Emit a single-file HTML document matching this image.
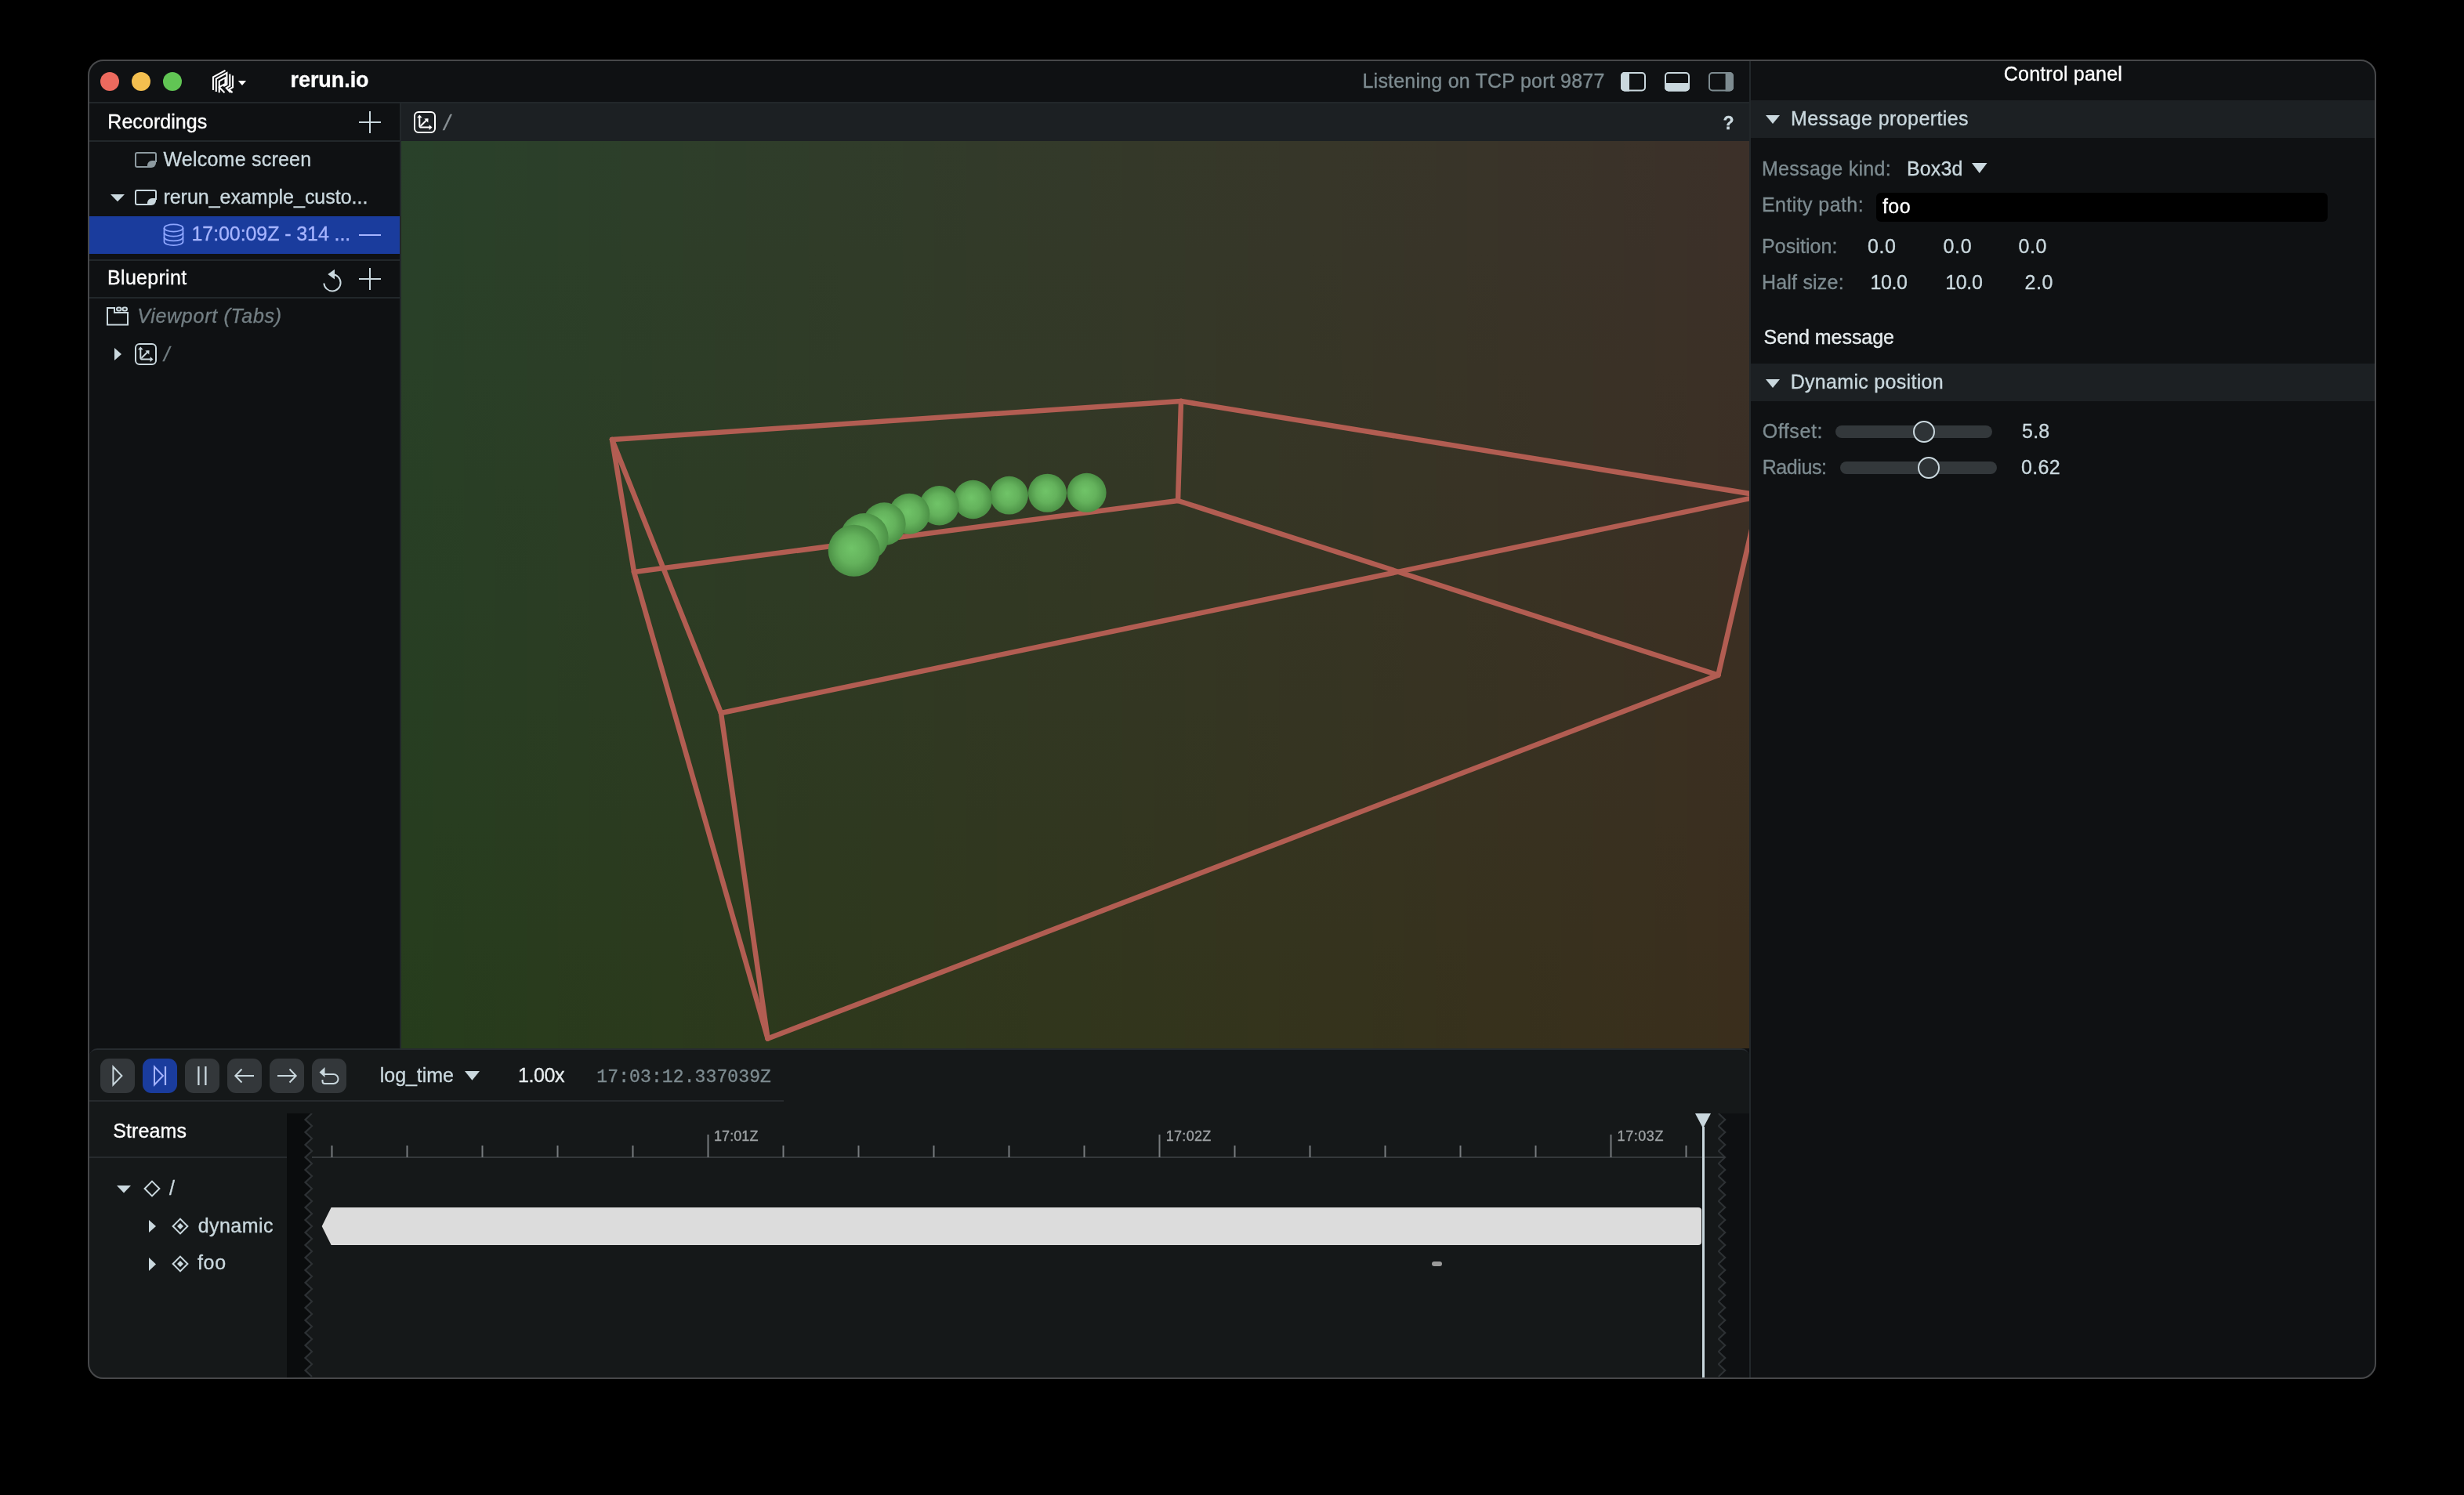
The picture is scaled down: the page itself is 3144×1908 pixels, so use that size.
<!DOCTYPE html>
<html><head><meta charset="utf-8"><style>
.t{}
html,body{margin:0;padding:0;background:#000;width:3144px;height:1908px;overflow:hidden;position:relative;font-family:"Liberation Sans",sans-serif;}
</style></head><body>
<div style="position:absolute;left:112px;top:76px;width:2920px;height:1684px;background:#0f1113;"></div>
<div style="position:absolute;left:114px;top:130px;width:2118px;height:2px;background:#22272a;"></div>
<div style="position:absolute;left:114px;top:179px;width:396px;height:2px;background:#22272a;"></div>
<div style="position:absolute;left:114px;top:331px;width:396px;height:2px;background:#22272a;"></div>
<div style="position:absolute;left:114px;top:379px;width:396px;height:2px;background:#22272a;"></div>
<div style="position:absolute;left:510px;top:132px;width:2px;height:1206px;background:#22272a;"></div>
<div style="position:absolute;left:512px;top:132px;width:1720px;height:48px;background:#1c2023;"></div>
<div style="position:absolute;left:512px;top:180px;width:1720px;height:1158px;overflow:hidden"><div style="position:absolute;left:0.00px;top:0;width:40.60px;height:1158px;background:linear-gradient(to bottom,#29412a,#294029,#294027,#283f25,#283e24,#273e22,#273d20,#273d1e,#263c1c)"></div><div style="position:absolute;left:40.00px;top:0;width:40.60px;height:1158px;background:linear-gradient(to bottom,#2a402a,#294028,#293f27,#293f25,#283e24,#283d22,#283d20,#273c1e,#273c1c)"></div><div style="position:absolute;left:80.00px;top:0;width:40.60px;height:1158px;background:linear-gradient(to bottom,#2a402a,#2a4028,#2a3f27,#293e25,#293e24,#293d22,#283d20,#283c1e,#273b1c)"></div><div style="position:absolute;left:120.00px;top:0;width:40.60px;height:1158px;background:linear-gradient(to bottom,#2b402a,#2b3f28,#2a3f27,#2a3e25,#293d24,#293d22,#293c20,#283c1e,#283b1c)"></div><div style="position:absolute;left:160.00px;top:0;width:40.60px;height:1158px;background:linear-gradient(to bottom,#2b3f2a,#2b3f28,#2b3e27,#2a3e25,#2a3d24,#2a3d22,#293c20,#293b1e,#293b1c)"></div><div style="position:absolute;left:200.00px;top:0;width:40.60px;height:1158px;background:linear-gradient(to bottom,#2c3f2a,#2c3f28,#2b3e27,#2b3d25,#2b3d24,#2a3c22,#2a3c20,#2a3b1e,#293a1c)"></div><div style="position:absolute;left:240.00px;top:0;width:40.60px;height:1158px;background:linear-gradient(to bottom,#2c3f2a,#2c3e28,#2c3e27,#2b3d25,#2b3c24,#2b3c22,#2a3b20,#2a3b1e,#2a3a1c)"></div><div style="position:absolute;left:280.00px;top:0;width:40.60px;height:1158px;background:linear-gradient(to bottom,#2d3e2a,#2d3e28,#2c3d27,#2c3d25,#2c3c24,#2b3c22,#2b3b20,#2b3a1e,#2a3a1c)"></div><div style="position:absolute;left:320.00px;top:0;width:40.60px;height:1158px;background:linear-gradient(to bottom,#2d3e2a,#2d3e28,#2d3d27,#2c3c25,#2c3c24,#2c3b22,#2b3b20,#2b3a1e,#2b3a1c)"></div><div style="position:absolute;left:360.00px;top:0;width:40.60px;height:1158px;background:linear-gradient(to bottom,#2e3e2a,#2e3d28,#2d3d27,#2d3c25,#2d3c24,#2c3b22,#2c3a20,#2c3a1e,#2b391c)"></div><div style="position:absolute;left:400.00px;top:0;width:40.60px;height:1158px;background:linear-gradient(to bottom,#2e3d2a,#2e3d28,#2e3c27,#2d3c25,#2d3b24,#2d3b22,#2c3a20,#2c3a1e,#2c391c)"></div><div style="position:absolute;left:440.00px;top:0;width:40.60px;height:1158px;background:linear-gradient(to bottom,#2f3d2a,#2f3c28,#2e3c27,#2e3b25,#2e3b24,#2d3a22,#2d3a20,#2d391e,#2c391c)"></div><div style="position:absolute;left:480.00px;top:0;width:40.60px;height:1158px;background:linear-gradient(to bottom,#2f3d2a,#2f3c28,#2f3c27,#2e3b25,#2e3b24,#2e3a22,#2d3920,#2d391e,#2d381c)"></div><div style="position:absolute;left:520.00px;top:0;width:40.60px;height:1158px;background:linear-gradient(to bottom,#303c2a,#303c28,#2f3b27,#2f3b25,#2f3a24,#2e3a22,#2e3920,#2e391e,#2d381c)"></div><div style="position:absolute;left:560.00px;top:0;width:40.60px;height:1158px;background:linear-gradient(to bottom,#303c2a,#303b28,#303b27,#2f3a25,#2f3a23,#2f3922,#2e3920,#2e381e,#2e381c)"></div><div style="position:absolute;left:600.00px;top:0;width:40.60px;height:1158px;background:linear-gradient(to bottom,#313c2a,#303b28,#303b27,#303a25,#303923,#2f3922,#2f3820,#2f381e,#2e371c)"></div><div style="position:absolute;left:640.00px;top:0;width:40.60px;height:1158px;background:linear-gradient(to bottom,#313b2a,#313b28,#313a27,#303a25,#303923,#303922,#2f3820,#2f381e,#2f371c)"></div><div style="position:absolute;left:680.00px;top:0;width:40.60px;height:1158px;background:linear-gradient(to bottom,#323b2a,#313a28,#313a27,#313925,#303923,#303822,#303820,#30371e,#2f371c)"></div><div style="position:absolute;left:720.00px;top:0;width:40.60px;height:1158px;background:linear-gradient(to bottom,#323a2a,#323a28,#323927,#313925,#313823,#313822,#303720,#30371e,#30361c)"></div><div style="position:absolute;left:760.00px;top:0;width:40.60px;height:1158px;background:linear-gradient(to bottom,#333a2a,#323a28,#323927,#323925,#313823,#313822,#313720,#31371e,#30361c)"></div><div style="position:absolute;left:800.00px;top:0;width:40.60px;height:1158px;background:linear-gradient(to bottom,#333a2a,#333928,#323927,#323825,#323823,#323722,#313720,#31361e,#31361c)"></div><div style="position:absolute;left:840.00px;top:0;width:40.60px;height:1158px;background:linear-gradient(to bottom,#33392a,#333928,#333827,#333825,#323723,#323722,#323620,#31361e,#31361c)"></div><div style="position:absolute;left:880.00px;top:0;width:40.60px;height:1158px;background:linear-gradient(to bottom,#343929,#343828,#333827,#333725,#333723,#323722,#323620,#32361e,#32351c)"></div><div style="position:absolute;left:920.00px;top:0;width:40.60px;height:1158px;background:linear-gradient(to bottom,#343829,#343828,#343827,#333725,#333723,#333622,#333620,#32351e,#32351c)"></div><div style="position:absolute;left:960.00px;top:0;width:40.60px;height:1158px;background:linear-gradient(to bottom,#353829,#343828,#343727,#343725,#343623,#333622,#333520,#33351e,#32351c)"></div><div style="position:absolute;left:1000.00px;top:0;width:40.60px;height:1158px;background:linear-gradient(to bottom,#353829,#353728,#353727,#343625,#343623,#343622,#333520,#33351e,#33341c)"></div><div style="position:absolute;left:1040.00px;top:0;width:40.60px;height:1158px;background:linear-gradient(to bottom,#363729,#353728,#353626,#353625,#343623,#343522,#343520,#34341e,#33341c)"></div><div style="position:absolute;left:1080.00px;top:0;width:40.60px;height:1158px;background:linear-gradient(to bottom,#363729,#363628,#353626,#353625,#353523,#353522,#343420,#34341e,#34341c)"></div><div style="position:absolute;left:1120.00px;top:0;width:40.60px;height:1158px;background:linear-gradient(to bottom,#363629,#363628,#363626,#363525,#353523,#353422,#353420,#34341e,#34331c)"></div><div style="position:absolute;left:1160.00px;top:0;width:40.60px;height:1158px;background:linear-gradient(to bottom,#373629,#373628,#363526,#363525,#363423,#353422,#353420,#35331e,#35331c)"></div><div style="position:absolute;left:1200.00px;top:0;width:40.60px;height:1158px;background:linear-gradient(to bottom,#373629,#373528,#373526,#363425,#363423,#363422,#363320,#35331e,#35331c)"></div><div style="position:absolute;left:1240.00px;top:0;width:40.60px;height:1158px;background:linear-gradient(to bottom,#383529,#373528,#373426,#373425,#373423,#363322,#363320,#36331e,#35321c)"></div><div style="position:absolute;left:1280.00px;top:0;width:40.60px;height:1158px;background:linear-gradient(to bottom,#383529,#383428,#373426,#373425,#373323,#373322,#363320,#36321e,#36321c)"></div><div style="position:absolute;left:1320.00px;top:0;width:40.60px;height:1158px;background:linear-gradient(to bottom,#383429,#383428,#383426,#383325,#373323,#373322,#373220,#37321e,#36311c)"></div><div style="position:absolute;left:1360.00px;top:0;width:40.60px;height:1158px;background:linear-gradient(to bottom,#393429,#393428,#383326,#383325,#383323,#373222,#373220,#37311e,#37311c)"></div><div style="position:absolute;left:1400.00px;top:0;width:40.60px;height:1158px;background:linear-gradient(to bottom,#393329,#393328,#393326,#383225,#383223,#383222,#383120,#37311e,#37311c)"></div><div style="position:absolute;left:1440.00px;top:0;width:40.60px;height:1158px;background:linear-gradient(to bottom,#3a3329,#393328,#393226,#393225,#393223,#383122,#383120,#38311e,#37301c)"></div><div style="position:absolute;left:1480.00px;top:0;width:40.60px;height:1158px;background:linear-gradient(to bottom,#3a3329,#3a3228,#393226,#393225,#393123,#393122,#383120,#38301e,#38301c)"></div><div style="position:absolute;left:1520.00px;top:0;width:40.60px;height:1158px;background:linear-gradient(to bottom,#3a3229,#3a3228,#3a3126,#3a3125,#393123,#393122,#393020,#39301e,#38301c)"></div><div style="position:absolute;left:1560.00px;top:0;width:40.60px;height:1158px;background:linear-gradient(to bottom,#3b3229,#3a3128,#3a3126,#3a3125,#3a3023,#393022,#393020,#39301e,#392f1c)"></div><div style="position:absolute;left:1600.00px;top:0;width:40.60px;height:1158px;background:linear-gradient(to bottom,#3b3129,#3b3128,#3b3126,#3a3025,#3a3023,#3a3021,#3a3020,#392f1e,#392f1c)"></div><div style="position:absolute;left:1640.00px;top:0;width:40.60px;height:1158px;background:linear-gradient(to bottom,#3b3129,#3b3028,#3b3026,#3b3025,#3a3023,#3a2f21,#3a2f20,#3a2f1e,#392f1c)"></div><div style="position:absolute;left:1680.00px;top:0;width:40.60px;height:1158px;background:linear-gradient(to bottom,#3c3029,#3c3028,#3b3026,#3b2f25,#3b2f23,#3b2f21,#3a2f20,#3a2e1e,#3a2e1c)"></div></div>
<div style="position:absolute;left:2222px;top:1338px;width:10px;height:10px;background:#0e1012;"></div>
<div style="position:absolute;left:114px;top:1338px;width:2118px;height:1420px;box-sizing:border-box;border-top:2px solid #262b2f;border-radius:10px 10px 0 0;background:#151819"></div>
<div style="position:absolute;left:2232px;top:78px;width:2px;height:1680px;background:#22272a;"></div>
<div style="position:absolute;left:2234px;top:78px;width:796px;height:1680px;background:#0f1113;"></div>
<div style="position:absolute;left:2234px;top:128px;width:796px;height:48px;background:#1c2023;"></div>
<div style="position:absolute;left:2234px;top:464px;width:796px;height:48px;background:#1c2023;"></div>
<div style="position:absolute;left:127.8px;top:91.8px;width:24px;height:24px;border-radius:50%;background:#ec6a5e"></div>
<div style="position:absolute;left:168px;top:91.8px;width:24px;height:24px;border-radius:50%;background:#f4bf4f"></div>
<div style="position:absolute;left:208px;top:91.8px;width:24px;height:24px;border-radius:50%;background:#61c554"></div>
<svg style="position:absolute;left:269px;top:87px;" width="32" height="34" viewBox="0 0 32 34"><g fill="none" stroke="#fff" stroke-width="2.1" stroke-linejoin="miter"><path d="M3,28 V11.4 L18.5,2.8"/><path d="M6.8,30 V13.5 L20.4,6 V20.9 L16.2,23.2"/><path d="M10.7,31.3 V16.5 L18.5,12.2 V19.8 L10.7,24.2 L17.5,31.3"/><path d="M24.3,7.5 V22.7 L19.8,25.2 L25.2,31.1"/><path d="M28,9.5 V24.5 L23.2,27.2 L27.6,31.1"/></g></svg>
<svg style="position:absolute;left:303px;top:102px;" width="12" height="8" viewBox="0 0 12 8"><path d="M0.8,0.9 H11.1 L6,6.9 Z" fill="#fff"/></svg>
<svg style="position:absolute;left:2068px;top:92px;" width="32" height="25" viewBox="0 0 32 25"><rect x="1" y="1" width="30" height="22.4" rx="4" fill="none" stroke="#cad8de" stroke-width="2"/><path d="M5,0 H11 V24.4 H5 A5,5 0 0 1 0,19.4 V5 A5,5 0 0 1 5,0 Z" fill="#cad8de"/></svg>
<svg style="position:absolute;left:2124px;top:92px;" width="32" height="25" viewBox="0 0 32 25"><rect x="1" y="1" width="30" height="22.4" rx="4" fill="none" stroke="#cad8de" stroke-width="2"/><path d="M0,14 H32 V19.4 A5,5 0 0 1 27,24.4 H5 A5,5 0 0 1 0,19.4 Z" fill="#cad8de"/></svg>
<svg style="position:absolute;left:2180px;top:92px;" width="32" height="25" viewBox="0 0 32 25"><rect x="1" y="1" width="30" height="22.4" rx="4" fill="none" stroke="#7d8b90" stroke-width="2"/><path d="M21.6,0 H27 A5,5 0 0 1 32,5 V19.4 A5,5 0 0 1 27,24.4 H21.6 Z" fill="#7d8b90"/></svg>
<svg style="position:absolute;left:457px;top:141px;" width="30" height="30" viewBox="0 0 30 30"><path d="M15,1 V29 M1,15 H29" stroke="#cad8de" stroke-width="2"/></svg>
<svg style="position:absolute;left:172px;top:194px;" width="28" height="20" viewBox="0 0 28 20"><path d="M3,1 H25 A2,2 0 0 1 27,3 V12 H22 A5,5 0 0 0 17,17 V19 H3 A2,2 0 0 1 1,17 V3 A2,2 0 0 1 3,1 Z" fill="none" stroke="#8d9aa0" stroke-width="2"/><path d="M17,18.5 V17 A4.5,4.5 0 0 1 21.5,12.5 H27 V14 A6,6 0 0 1 21,20 H17 Z" fill="#8d9aa0"/></svg>
<svg style="position:absolute;left:140px;top:247px;" width="20" height="11" viewBox="0 0 20 11"><path d="M1,1 H19 L10,10.2 Z" fill="#cad8de"/></svg>
<svg style="position:absolute;left:172px;top:242px;" width="28" height="20" viewBox="0 0 28 20"><path d="M3,1 H25 A2,2 0 0 1 27,3 V12 H22 A5,5 0 0 0 17,17 V19 H3 A2,2 0 0 1 1,17 V3 A2,2 0 0 1 3,1 Z" fill="none" stroke="#cad8de" stroke-width="2"/><path d="M17,18.5 V17 A4.5,4.5 0 0 1 21.5,12.5 H27 V14 A6,6 0 0 1 21,20 H17 Z" fill="#cad8de"/></svg>
<div style="position:absolute;left:114px;top:276px;width:396px;height:47.6px;background:#1a3c9d;"></div>
<svg style="position:absolute;left:208px;top:285px;" width="27" height="30" viewBox="0 0 27 30"><g fill="none" stroke="#8ea6ff" stroke-width="1.8"><ellipse cx="13.5" cy="6" rx="12" ry="4.6"/><path d="M1.5,6 V23.5 A12,4.6 0 0 0 25.5,23.5 V6"/><path d="M1.5,12 A12,4.6 0 0 0 25.5,12"/><path d="M1.5,17.8 A12,4.6 0 0 0 25.5,17.8"/></g></svg>
<div style="position:absolute;left:458px;top:299px;width:28px;height:2px;background:#a6b4ff;"></div>
<svg style="position:absolute;left:411px;top:340px;" width="32" height="34" viewBox="0 0 32 34"><path d="M13.6,10.2 A10.6,10.6 0 1 1 2.4,21.5" fill="none" stroke="#cad8de" stroke-width="2"/><path d="M7.3,10.1 L16,3.8 V16.6 Z" fill="#cad8de"/></svg>
<svg style="position:absolute;left:457px;top:341px;" width="30" height="30" viewBox="0 0 30 30"><path d="M15,1 V29 M1,15 H29" stroke="#cad8de" stroke-width="2"/></svg>
<svg style="position:absolute;left:135px;top:390px;" width="30" height="27" viewBox="0 0 30 27"><g fill="none" stroke="#cad8de" stroke-width="2"><path d="M2,3 H11 V9 H28 V24.5 H2 Z"/><rect x="14" y="2.5" width="5.5" height="4" rx="2"/><rect x="21.5" y="2.5" width="5.5" height="4" rx="2"/></g></svg>
<svg style="position:absolute;left:145px;top:443px;" width="12" height="18" viewBox="0 0 12 18"><path d="M1,1 V17 L10,9 Z" fill="#cad8de"/></svg>
<svg style="position:absolute;left:172px;top:438px;" width="28" height="28" viewBox="0 0 28 28"><g fill="none" stroke="#cad8de" stroke-width="2"><rect x="1" y="1" width="26" height="26" rx="5"/><path d="M7.3,6.5 V18.5 Q7.3,20.6 9.4,20.6 H21"/><path d="M8.5,19 L17.5,10"/></g><g fill="#cad8de"><path d="M4,8.2 L7.3,4.5 L10.7,8.2 Z"/><path d="M19.6,17.2 L23.5,20.6 L19.6,24 Z"/><path d="M13.3,9.4 L18.5,9.3 L18.3,14.6 Z"/></g></svg>
<svg style="position:absolute;left:528px;top:142px;" width="28" height="28" viewBox="0 0 28 28"><g fill="none" stroke="#ffffff" stroke-width="2"><rect x="1" y="1" width="26" height="26" rx="5"/><path d="M7.3,6.5 V18.5 Q7.3,20.6 9.4,20.6 H21"/><path d="M8.5,19 L17.5,10"/></g><g fill="#ffffff"><path d="M4,8.2 L7.3,4.5 L10.7,8.2 Z"/><path d="M19.6,17.2 L23.5,20.6 L19.6,24 Z"/><path d="M13.3,9.4 L18.5,9.3 L18.3,14.6 Z"/></g></svg>
<svg style="position:absolute;left:512px;top:180px;overflow:hidden" width="1720" height="1158" viewBox="0 0 1720 1158"><defs><radialGradient id="sg" cx="0.5" cy="0.5" r="0.5" fx="0.45" fy="0.45"><stop offset="0" stop-color="#70c468"/><stop offset="0.55" stop-color="#64b25c"/><stop offset="1" stop-color="#4c9146"/></radialGradient></defs><g stroke="#b25d52" stroke-width="6.5" stroke-linecap="round" stroke-linejoin="round" fill="none"><path d="M269.0,381.0 L995.0,332.0"/><path d="M269.0,381.0 L297.0,550.0"/><path d="M269.0,381.0 L408.0,730.0"/><path d="M297.0,550.0 L991.0,459.0"/><path d="M995.0,332.0 L991.0,459.0"/><path d="M991.0,459.0 L1680.4,681.6"/><path d="M297.0,550.0 L467.6,1145.5"/><path d="M408.0,730.0 L467.6,1145.5"/><path d="M467.6,1145.5 L1680.4,681.6"/><path d="M995.0,332.0 L1809.5,464.4"/><path d="M408.0,730.0 L1877.0,423.5"/><path d="M1680.4,681.6 L1759.6,336.8"/></g><circle cx="874.6" cy="448.8" r="25" fill="url(#sg)"/><circle cx="824.5" cy="449.3" r="24.55" fill="url(#sg)"/><circle cx="775.6" cy="452.2" r="24.35" fill="url(#sg)"/><circle cx="729.5" cy="457.5" r="24.7" fill="url(#sg)"/><circle cx="686.5" cy="465.3" r="25.2" fill="url(#sg)"/><circle cx="648.3" cy="475.7" r="26" fill="url(#sg)"/><circle cx="616.3" cy="488.7" r="27.4" fill="url(#sg)"/><circle cx="591.0" cy="505.7" r="30.6" fill="url(#sg)"/><circle cx="577.7" cy="522.8" r="33" fill="url(#sg)"/></svg>
<svg style="position:absolute;left:2252px;top:146px;" width="20" height="13" viewBox="0 0 20 13"><path d="M1,1 H19 L10.0,12 Z" fill="#cad8de"/></svg>
<svg style="position:absolute;left:2515px;top:207px;" width="21.5" height="15" viewBox="0 0 21.5 15"><path d="M1,1 H20.5 L10.75,14 Z" fill="#cad8de"/></svg>
<div style="position:absolute;left:2394px;top:246px;width:576px;height:37px;background:#000;border-radius:6px"></div>
<svg style="position:absolute;left:2252px;top:482.7px;" width="20" height="13" viewBox="0 0 20 13"><path d="M1,1 H19 L10.0,12 Z" fill="#cad8de"/></svg>
<div style="position:absolute;left:2342.4px;top:543px;width:199.5999999999999px;height:16px;border-radius:8px;background:#33383b"></div>
<div style="position:absolute;left:2441px;top:536.8px;width:24px;height:24px;border-radius:50%;background:#2e3336;border:2px solid #cad8de"></div>
<div style="position:absolute;left:2348.3px;top:589.4px;width:199.69999999999982px;height:16px;border-radius:8px;background:#33383b"></div>
<div style="position:absolute;left:2447.3px;top:583.2px;width:24px;height:24px;border-radius:50%;background:#2e3336;border:2px solid #cad8de"></div>
<div style="position:absolute;left:128px;top:1351px;width:44px;height:44px;border-radius:11px;background:#33373a"></div>
<div style="position:absolute;left:182px;top:1351px;width:44px;height:44px;border-radius:11px;background:#1a3c9d"></div>
<div style="position:absolute;left:236px;top:1351px;width:44px;height:44px;border-radius:11px;background:#33373a"></div>
<div style="position:absolute;left:290px;top:1351px;width:44px;height:44px;border-radius:11px;background:#33373a"></div>
<div style="position:absolute;left:344px;top:1351px;width:44px;height:44px;border-radius:11px;background:#33373a"></div>
<div style="position:absolute;left:398px;top:1351px;width:44px;height:44px;border-radius:11px;background:#33373a"></div>
<svg style="position:absolute;left:128px;top:1351px;" width="44" height="44" viewBox="0 0 44 44"><path d="M16.4,10.5 V33.5 L27.4,22 Z" fill="none" stroke="#cad8de" stroke-width="2" stroke-linejoin="miter"/></svg>
<svg style="position:absolute;left:182px;top:1351px;" width="44" height="44" viewBox="0 0 44 44"><path d="M15,10.5 V33.5 L26,22 Z" fill="none" stroke="#a6b4ff" stroke-width="2"/><path d="M29,10 V34" stroke="#a6b4ff" stroke-width="2.2"/></svg>
<svg style="position:absolute;left:236px;top:1351px;" width="44" height="44" viewBox="0 0 44 44"><path d="M17.4,10 V34 M26.4,10 V34" stroke="#cad8de" stroke-width="2.3"/></svg>
<svg style="position:absolute;left:290px;top:1351px;" width="44" height="44" viewBox="0 0 44 44"><path d="M10.5,22 H34 M18.5,13.5 L10.3,22 L18.5,30.5" fill="none" stroke="#cad8de" stroke-width="2"/></svg>
<svg style="position:absolute;left:344px;top:1351px;" width="44" height="44" viewBox="0 0 44 44"><path d="M10,22 H33.5 M25.5,13.5 L33.7,22 L25.5,30.5" fill="none" stroke="#cad8de" stroke-width="2"/></svg>
<svg style="position:absolute;left:398px;top:1351px;" width="44" height="44" viewBox="0 0 44 44"><path d="M14,20 H27.5 A6,6 0 0 1 27.5,32 H16.5 A3,3 0 0 1 13.5,29 V27" fill="none" stroke="#cad8de" stroke-width="2"/><path d="M9.5,17.5 L16.5,11 V24 Z" fill="#cad8de"/></svg>
<svg style="position:absolute;left:591.5px;top:1365.7px;" width="21" height="13.7" viewBox="0 0 21 13.7"><path d="M1,1 H20 L10.5,12.7 Z" fill="#cad8de"/></svg>
<div style="position:absolute;left:114px;top:1404px;width:886px;height:2px;background:#262a2d;"></div>
<div style="position:absolute;left:114px;top:1476px;width:252px;height:2px;background:#262a2d;"></div>
<svg style="position:absolute;left:366px;top:1421px;" width="34" height="337" viewBox="0 0 34 337"><path d="M0,0 L32,0 L23.5,8 L32,16 L23.5,24 L32,32 L23.5,40 L32,48 L23.5,56 L32,64 L23.5,72 L32,80 L23.5,88 L32,96 L23.5,104 L32,112 L23.5,120 L32,128 L23.5,136 L32,144 L23.5,152 L32,160 L23.5,168 L32,176 L23.5,184 L32,192 L23.5,200 L32,208 L23.5,216 L32,224 L23.5,232 L32,240 L23.5,248 L32,256 L23.5,264 L32,272 L23.5,280 L32,288 L23.5,296 L32,304 L23.5,312 L32,320 L23.5,328 L32,336 L0,337 Z" fill="#0a0c0d"/><path d="M32,0 L32,0 L23.5,8 L32,16 L23.5,24 L32,32 L23.5,40 L32,48 L23.5,56 L32,64 L23.5,72 L32,80 L23.5,88 L32,96 L23.5,104 L32,112 L23.5,120 L32,128 L23.5,136 L32,144 L23.5,152 L32,160 L23.5,168 L32,176 L23.5,184 L32,192 L23.5,200 L32,208 L23.5,216 L32,224 L23.5,232 L32,240 L23.5,248 L32,256 L23.5,264 L32,272 L23.5,280 L32,288 L23.5,296 L32,304 L23.5,312 L32,320 L23.5,328 L32,336" fill="none" stroke="#2d3134" stroke-width="2.2"/></svg>
<svg style="position:absolute;left:2192px;top:1421px;" width="40" height="337" viewBox="0 0 40 337"><path d="M40,0 L0.7,0 L0.7,0 L9.2,8 L0.7,16 L9.2,24 L0.7,32 L9.2,40 L0.7,48 L9.2,56 L0.7,64 L9.2,72 L0.7,80 L9.2,88 L0.7,96 L9.2,104 L0.7,112 L9.2,120 L0.7,128 L9.2,136 L0.7,144 L9.2,152 L0.7,160 L9.2,168 L0.7,176 L9.2,184 L0.7,192 L9.2,200 L0.7,208 L9.2,216 L0.7,224 L9.2,232 L0.7,240 L9.2,248 L0.7,256 L9.2,264 L0.7,272 L9.2,280 L0.7,288 L9.2,296 L0.7,304 L9.2,312 L0.7,320 L9.2,328 L0.7,336 L40,337 Z" fill="#0e1012"/><path d="M0.7,0 L0.7,0 L9.2,8 L0.7,16 L9.2,24 L0.7,32 L9.2,40 L0.7,48 L9.2,56 L0.7,64 L9.2,72 L0.7,80 L9.2,88 L0.7,96 L9.2,104 L0.7,112 L9.2,120 L0.7,128 L9.2,136 L0.7,144 L9.2,152 L0.7,160 L9.2,168 L0.7,176 L9.2,184 L0.7,192 L9.2,200 L0.7,208 L9.2,216 L0.7,224 L9.2,232 L0.7,240 L9.2,248 L0.7,256 L9.2,264 L0.7,272 L9.2,280 L0.7,288 L9.2,296 L0.7,304 L9.2,312 L0.7,320 L9.2,328 L0.7,336" fill="none" stroke="#2d3134" stroke-width="2.2"/></svg>
<div style="position:absolute;left:398px;top:1476px;width:1803px;height:2px;background:#34383b;"></div>
<svg style="position:absolute;left:366px;top:1421px;" width="1866" height="60" viewBox="0 0 1866 60"><g stroke="#777b7e" stroke-width="2"><path d="M57.5,41 V56"/><path d="M153.5,41 V56"/><path d="M249.5,41 V56"/><path d="M345.5,41 V56"/><path d="M441.5,41 V56"/><path d="M537.5,27 V56"/><path d="M633.5,41 V56"/><path d="M729.5,41 V56"/><path d="M825.5,41 V56"/><path d="M921.5,41 V56"/><path d="M1017.5,41 V56"/><path d="M1113.5,27 V56"/><path d="M1209.5,41 V56"/><path d="M1305.5,41 V56"/><path d="M1401.5,41 V56"/><path d="M1497.5,41 V56"/><path d="M1593.5,41 V56"/><path d="M1689.5,27 V56"/><path d="M1785.5,41 V56"/></g></svg>
<svg style="position:absolute;left:405px;top:1538px;" width="1772" height="54" viewBox="0 0 1772 54"><path d="M5.7,27 L17.6,3 H1762 A4,4 0 0 1 1766,7 V47 A4,4 0 0 1 1762,51 H17.6 Z" fill="#dcdcdc"/></svg>
<div style="position:absolute;left:1827px;top:1610px;width:13px;height:6px;border-radius:3px;background:#9a9a9a"></div>
<div style="position:absolute;left:2171.5px;top:1438px;width:3px;height:320px;background:#cad8de;"></div>
<svg style="position:absolute;left:2162px;top:1420px;" width="22" height="21" viewBox="0 0 22 21"><path d="M1,1 H21 L11,20 Z" fill="#cad8de"/></svg>
<svg style="position:absolute;left:148px;top:1512px;" width="20" height="12" viewBox="0 0 20 12"><path d="M1,1 H19 L10,10.4 Z" fill="#cad8de"/></svg>
<svg style="position:absolute;left:182.7px;top:1505.8px;" width="22" height="22" viewBox="0 0 22 22"><path d="M11,1.6 L20.4,11 L11,20.4 L1.6,11 Z" fill="none" stroke="#cad8de" stroke-width="2"/></svg>
<svg style="position:absolute;left:189px;top:1556px;" width="12" height="18" viewBox="0 0 12 18"><path d="M1,1 V17 L10,9 Z" fill="#cad8de"/></svg>
<svg style="position:absolute;left:218.8px;top:1553.9px;" width="22" height="22" viewBox="0 0 22 22"><path d="M11,1.6 L20.4,11 L11,20.4 L1.6,11 Z" fill="none" stroke="#cad8de" stroke-width="2"/><path d="M11,7 L15,11 L11,15 L7,11 Z" fill="#cad8de"/></svg>
<svg style="position:absolute;left:189px;top:1604px;" width="12" height="19" viewBox="0 0 12 19"><path d="M1,1 V18 L10,9.5 Z" fill="#cad8de"/></svg>
<svg style="position:absolute;left:219.1px;top:1602px;" width="22" height="22" viewBox="0 0 22 22"><path d="M11,1.6 L20.4,11 L11,20.4 L1.6,11 Z" fill="none" stroke="#cad8de" stroke-width="2"/><path d="M11,7 L15,11 L11,15 L7,11 Z" fill="#cad8de"/></svg>
<div style="position:absolute;left:112px;top:76px;width:2920px;height:1684px;box-sizing:border-box;border:2px solid #47484a;border-radius:20px;box-shadow:0 0 0 400px #000;pointer-events:none"></div>
<div style="position:absolute;left:0;top:0;width:3144px;height:1908px;will-change:transform">
<div style="position:absolute;left:370.5px;top:89.14px;font-family:'Liberation Sans',sans-serif;font-size:27px;line-height:27px;color:#ffffff;font-weight:700;font-style:normal;white-space:pre;-webkit-text-stroke:0.35px #ffffff;letter-spacing:-0.064px;">rerun.io</div>
<div style="position:absolute;left:1738.5px;top:90.83px;font-family:'Liberation Sans',sans-serif;font-size:25px;line-height:25px;color:#7d8b90;font-weight:400;font-style:normal;white-space:pre;-webkit-text-stroke:0.35px #7d8b90;letter-spacing:0.213px;">Listening on TCP port 9877</div>
<div style="position:absolute;left:2556.8px;top:81.83px;font-family:'Liberation Sans',sans-serif;font-size:25px;line-height:25px;color:#ffffff;font-weight:400;font-style:normal;white-space:pre;-webkit-text-stroke:0.35px #ffffff;letter-spacing:0.191px;">Control panel</div>
<div style="position:absolute;left:137.3px;top:142.93px;font-family:'Liberation Sans',sans-serif;font-size:25px;line-height:25px;color:#ffffff;font-weight:400;font-style:normal;white-space:pre;-webkit-text-stroke:0.35px #ffffff;letter-spacing:0.055px;">Recordings</div>
<div style="position:absolute;left:208.4px;top:190.83px;font-family:'Liberation Sans',sans-serif;font-size:25px;line-height:25px;color:#cad8de;font-weight:400;font-style:normal;white-space:pre;-webkit-text-stroke:0.35px #cad8de;letter-spacing:0.234px;">Welcome screen</div>
<div style="position:absolute;left:208.4px;top:238.83px;font-family:'Liberation Sans',sans-serif;font-size:25px;line-height:25px;color:#cad8de;font-weight:400;font-style:normal;white-space:pre;-webkit-text-stroke:0.35px #cad8de;letter-spacing:-0.012px;">rerun_example_custo...</div>
<div style="position:absolute;left:244.5px;top:286.33px;font-family:'Liberation Sans',sans-serif;font-size:25px;line-height:25px;color:#a6b4ff;font-weight:400;font-style:normal;white-space:pre;-webkit-text-stroke:0.35px #a6b4ff;letter-spacing:-0.084px;">17:00:09Z - 314 ...</div>
<div style="position:absolute;left:137.1px;top:342.43px;font-family:'Liberation Sans',sans-serif;font-size:25px;line-height:25px;color:#ffffff;font-weight:400;font-style:normal;white-space:pre;-webkit-text-stroke:0.35px #ffffff;letter-spacing:0.292px;">Blueprint</div>
<div style="position:absolute;left:175.2px;top:390.63px;font-family:'Liberation Sans',sans-serif;font-size:25px;line-height:25px;color:#737f84;font-weight:400;font-style:italic;white-space:pre;-webkit-text-stroke:0.35px #737f84;letter-spacing:0.733px;">Viewport (Tabs)</div>
<div style="position:absolute;left:209.0px;top:438.99px;font-family:'Liberation Sans',sans-serif;font-size:26px;line-height:26px;color:#737f84;font-weight:400;font-style:italic;white-space:pre;-webkit-text-stroke:0.35px #737f84;">/</div>
<div style="position:absolute;left:566.5px;top:142.79px;font-family:'Liberation Sans',sans-serif;font-size:28px;line-height:28px;color:#8a9296;font-weight:400;font-style:italic;white-space:pre;-webkit-text-stroke:0.35px #8a9296;">/</div>
<div style="position:absolute;left:2198.5px;top:145.53px;font-family:'Liberation Sans',sans-serif;font-size:23px;line-height:23px;color:#cad8de;font-weight:700;font-style:normal;white-space:pre;-webkit-text-stroke:0.35px #cad8de;">?</div>
<div style="position:absolute;left:2285.0px;top:139.33px;font-family:'Liberation Sans',sans-serif;font-size:25px;line-height:25px;color:#cad8de;font-weight:400;font-style:normal;white-space:pre;-webkit-text-stroke:0.35px #cad8de;letter-spacing:0.413px;">Message properties</div>
<div style="position:absolute;left:2248.0px;top:202.53px;font-family:'Liberation Sans',sans-serif;font-size:25px;line-height:25px;color:#7d8b90;font-weight:400;font-style:normal;white-space:pre;-webkit-text-stroke:0.35px #7d8b90;letter-spacing:0.292px;">Message kind:</div>
<div style="position:absolute;left:2433.0px;top:202.53px;font-family:'Liberation Sans',sans-serif;font-size:25px;line-height:25px;color:#cad8de;font-weight:400;font-style:normal;white-space:pre;-webkit-text-stroke:0.35px #cad8de;letter-spacing:0.122px;">Box3d</div>
<div style="position:absolute;left:2248.0px;top:248.53px;font-family:'Liberation Sans',sans-serif;font-size:25px;line-height:25px;color:#7d8b90;font-weight:400;font-style:normal;white-space:pre;-webkit-text-stroke:0.35px #7d8b90;letter-spacing:0.410px;">Entity path:</div>
<div style="position:absolute;left:2402.0px;top:251.13px;font-family:'Liberation Sans',sans-serif;font-size:25px;line-height:25px;color:#ffffff;font-weight:400;font-style:normal;white-space:pre;-webkit-text-stroke:0.35px #ffffff;letter-spacing:0.411px;">foo</div>
<div style="position:absolute;left:2248.0px;top:302.43px;font-family:'Liberation Sans',sans-serif;font-size:25px;line-height:25px;color:#7d8b90;font-weight:400;font-style:normal;white-space:pre;-webkit-text-stroke:0.35px #7d8b90;letter-spacing:0.068px;">Position:</div>
<div style="position:absolute;left:2383.0px;top:302.43px;font-family:'Liberation Sans',sans-serif;font-size:25px;line-height:25px;color:#cad8de;font-weight:400;font-style:normal;white-space:pre;-webkit-text-stroke:0.35px #cad8de;letter-spacing:0.611px;">0.0</div>
<div style="position:absolute;left:2479.6px;top:302.43px;font-family:'Liberation Sans',sans-serif;font-size:25px;line-height:25px;color:#cad8de;font-weight:400;font-style:normal;white-space:pre;-webkit-text-stroke:0.35px #cad8de;letter-spacing:0.611px;">0.0</div>
<div style="position:absolute;left:2575.4px;top:302.43px;font-family:'Liberation Sans',sans-serif;font-size:25px;line-height:25px;color:#cad8de;font-weight:400;font-style:normal;white-space:pre;-webkit-text-stroke:0.35px #cad8de;letter-spacing:0.611px;">0.0</div>
<div style="position:absolute;left:2248.0px;top:348.33px;font-family:'Liberation Sans',sans-serif;font-size:25px;line-height:25px;color:#7d8b90;font-weight:400;font-style:normal;white-space:pre;-webkit-text-stroke:0.35px #7d8b90;letter-spacing:0.199px;">Half size:</div>
<div style="position:absolute;left:2386.4px;top:348.33px;font-family:'Liberation Sans',sans-serif;font-size:25px;line-height:25px;color:#cad8de;font-weight:400;font-style:normal;white-space:pre;-webkit-text-stroke:0.35px #cad8de;letter-spacing:-0.343px;">10.0</div>
<div style="position:absolute;left:2482.2px;top:348.33px;font-family:'Liberation Sans',sans-serif;font-size:25px;line-height:25px;color:#cad8de;font-weight:400;font-style:normal;white-space:pre;-webkit-text-stroke:0.35px #cad8de;letter-spacing:-0.343px;">10.0</div>
<div style="position:absolute;left:2583.4px;top:348.33px;font-family:'Liberation Sans',sans-serif;font-size:25px;line-height:25px;color:#cad8de;font-weight:400;font-style:normal;white-space:pre;-webkit-text-stroke:0.35px #cad8de;letter-spacing:0.611px;">2.0</div>
<div style="position:absolute;left:2250.6px;top:418.23px;font-family:'Liberation Sans',sans-serif;font-size:25px;line-height:25px;color:#e6ecee;font-weight:400;font-style:normal;white-space:pre;-webkit-text-stroke:0.35px #e6ecee;letter-spacing:-0.032px;">Send message</div>
<div style="position:absolute;left:2284.7px;top:475.43px;font-family:'Liberation Sans',sans-serif;font-size:25px;line-height:25px;color:#cad8de;font-weight:400;font-style:normal;white-space:pre;-webkit-text-stroke:0.35px #cad8de;letter-spacing:0.309px;">Dynamic position</div>
<div style="position:absolute;left:2248.7px;top:537.83px;font-family:'Liberation Sans',sans-serif;font-size:25px;line-height:25px;color:#7d8b90;font-weight:400;font-style:normal;white-space:pre;-webkit-text-stroke:0.35px #7d8b90;letter-spacing:0.587px;">Offset:</div>
<div style="position:absolute;left:2580.0px;top:537.83px;font-family:'Liberation Sans',sans-serif;font-size:25px;line-height:25px;color:#cad8de;font-weight:400;font-style:normal;white-space:pre;-webkit-text-stroke:0.35px #cad8de;letter-spacing:0.245px;">5.8</div>
<div style="position:absolute;left:2248.7px;top:584.23px;font-family:'Liberation Sans',sans-serif;font-size:25px;line-height:25px;color:#7d8b90;font-weight:400;font-style:normal;white-space:pre;-webkit-text-stroke:0.35px #7d8b90;letter-spacing:-0.409px;">Radius:</div>
<div style="position:absolute;left:2579.0px;top:584.23px;font-family:'Liberation Sans',sans-serif;font-size:25px;line-height:25px;color:#cad8de;font-weight:400;font-style:normal;white-space:pre;-webkit-text-stroke:0.35px #cad8de;letter-spacing:0.332px;">0.62</div>
<div style="position:absolute;left:484.8px;top:1360.23px;font-family:'Liberation Sans',sans-serif;font-size:25px;line-height:25px;color:#cad8de;font-weight:400;font-style:normal;white-space:pre;-webkit-text-stroke:0.35px #cad8de;letter-spacing:-0.062px;">log_time</div>
<div style="position:absolute;left:661.0px;top:1360.23px;font-family:'Liberation Sans',sans-serif;font-size:25px;line-height:25px;color:#e6ecee;font-weight:400;font-style:normal;white-space:pre;-webkit-text-stroke:0.35px #e6ecee;letter-spacing:-0.434px;">1.00x</div>
<div style="position:absolute;left:761.3px;top:1363.78px;font-family:'Liberation Mono',sans-serif;font-size:23px;line-height:23px;color:#7d8b90;font-weight:400;font-style:normal;white-space:pre;-webkit-text-stroke:0.35px #7d8b90;letter-spacing:0.116px;">17:03:12.337039Z</div>
<div style="position:absolute;left:144.3px;top:1430.83px;font-family:'Liberation Sans',sans-serif;font-size:25px;line-height:25px;color:#ffffff;font-weight:400;font-style:normal;white-space:pre;-webkit-text-stroke:0.35px #ffffff;letter-spacing:0.087px;">Streams</div>
<div style="position:absolute;left:911.0px;top:1441.06px;font-family:'Liberation Sans',sans-serif;font-size:18px;line-height:18px;color:#9ea2a4;font-weight:400;font-style:normal;white-space:pre;-webkit-text-stroke:0.35px #9ea2a4;letter-spacing:0.076px;">17:01Z</div>
<div style="position:absolute;left:1487.7px;top:1441.06px;font-family:'Liberation Sans',sans-serif;font-size:18px;line-height:18px;color:#9ea2a4;font-weight:400;font-style:normal;white-space:pre;-webkit-text-stroke:0.35px #9ea2a4;letter-spacing:0.326px;">17:02Z</div>
<div style="position:absolute;left:2063.6px;top:1441.06px;font-family:'Liberation Sans',sans-serif;font-size:18px;line-height:18px;color:#9ea2a4;font-weight:400;font-style:normal;white-space:pre;-webkit-text-stroke:0.35px #9ea2a4;letter-spacing:0.559px;">17:03Z</div>
<div style="position:absolute;left:216.0px;top:1503.83px;font-family:'Liberation Sans',sans-serif;font-size:25px;line-height:25px;color:#cad8de;font-weight:400;font-style:normal;white-space:pre;-webkit-text-stroke:0.35px #cad8de;">/</div>
<div style="position:absolute;left:252.7px;top:1551.83px;font-family:'Liberation Sans',sans-serif;font-size:25px;line-height:25px;color:#cad8de;font-weight:400;font-style:normal;white-space:pre;-webkit-text-stroke:0.35px #cad8de;letter-spacing:0.458px;">dynamic</div>
<div style="position:absolute;left:251.9px;top:1599.43px;font-family:'Liberation Sans',sans-serif;font-size:25px;line-height:25px;color:#cad8de;font-weight:400;font-style:normal;white-space:pre;-webkit-text-stroke:0.35px #cad8de;letter-spacing:0.711px;">foo</div>
</div>
</body></html>
